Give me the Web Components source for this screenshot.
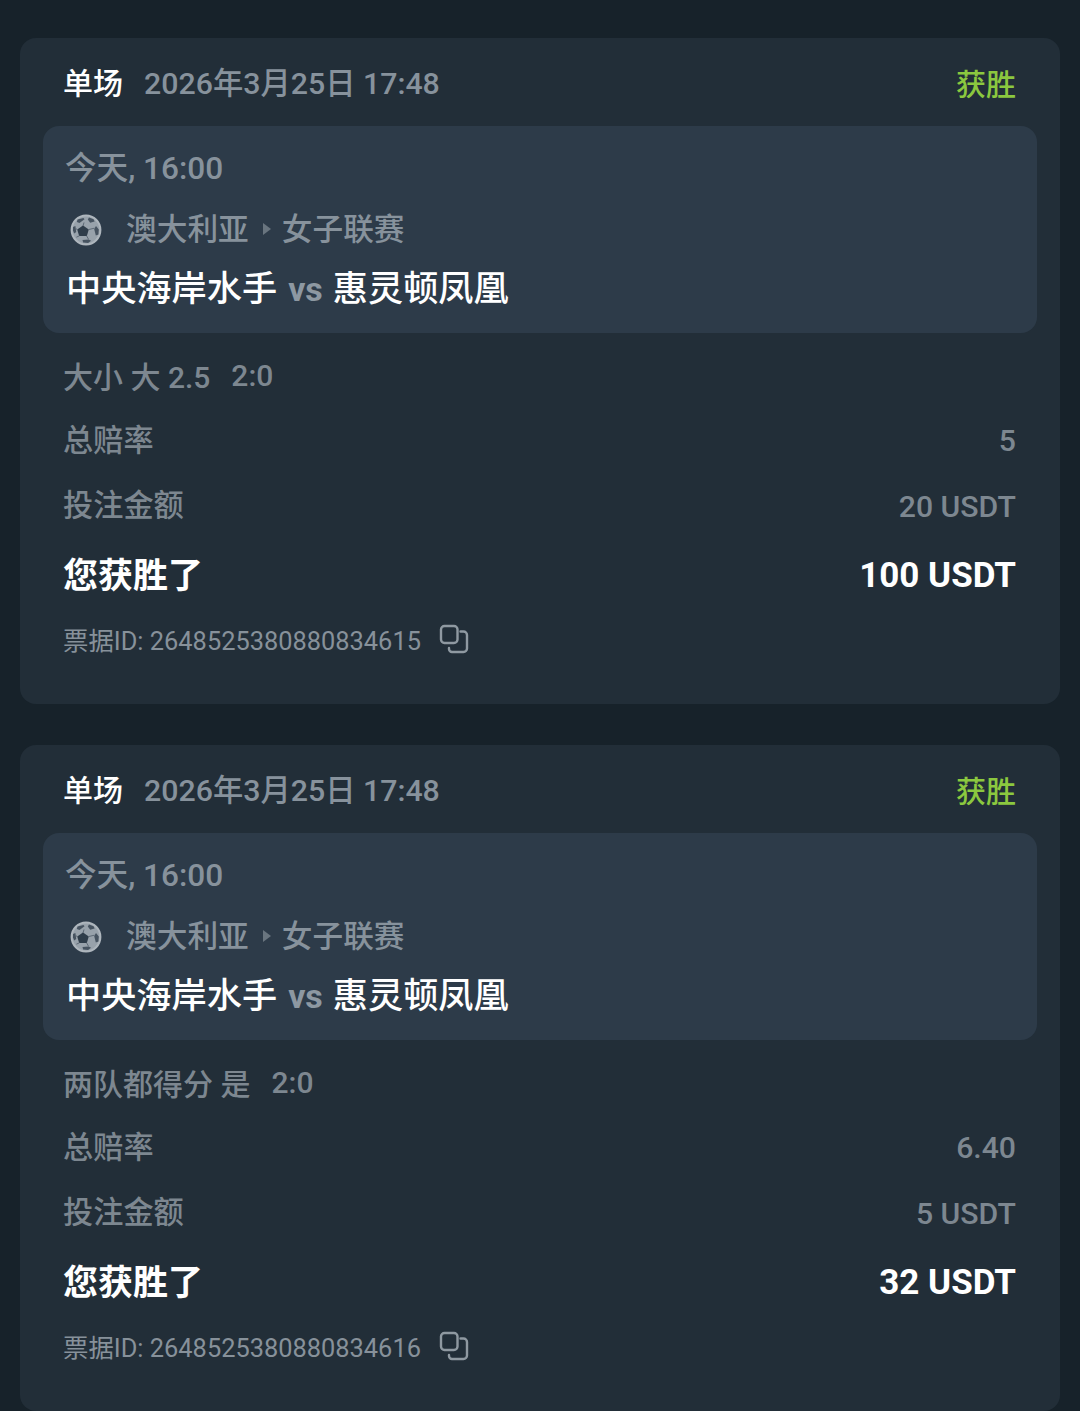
<!DOCTYPE html>
<html lang="zh-CN">
<head>
<meta charset="utf-8">
<title>Tickets</title>
<style>
  html, body { margin: 0; height: 1411px; overflow: hidden; }
  body {
    background: #17222a;
    font-family: Roboto, "Noto Sans CJK SC", sans-serif;
  }
  #list { display: flex; flex-direction: column; gap: 41px; padding: 38px 20px 0; }
</style>
</head>
<body>
<div id="list">
  <ticket-card market="大小 大 2.5" score="2:0" odds="5" stake="20 USDT" win="100 USDT" ticket="2648525380880834615"></ticket-card>
  <ticket-card market="两队都得分 是" score="2:0" odds="6.40" stake="5 USDT" win="32 USDT" ticket="2648525380880834616"></ticket-card>
</div>

<script>
class SoccerIcon extends HTMLElement {
  constructor() {
    super();
    this.attachShadow({mode: 'open'}).innerHTML = `
      <style>
        :host { display: block; width: 32px; height: 32px; }
        svg { display: block; }
      </style>
      <svg width="32" height="32" viewBox="0 0 32 32">
        <circle cx="16" cy="16" r="14.4" fill="#98a2ab" stroke="#aeb6bd" stroke-width="2"/>
        <path d="M13 11.5l5.8 3.9-2 6.6H9.2l-2-6.6z" fill="#2f3d4a"/>
        <path d="M7.5 5.5l6-1.6 1 1.4-5 3.8-2.6-1.2z" fill="#465360"/>
        <path d="M19 3.4l4.6 1.8 1 2.4-4.4 1.2-2.4-3.4z" fill="#465360"/>
        <path d="M26 12l2.8 3.4-.4 5-2.6 1.2-1.6-6.6z" fill="#465360"/>
        <path d="M3 13l2.4-1 .8 6-2 1.4-1.2-3z" fill="#465360"/>
        <path d="M12.5 26l6-.6 2.6 1.4-3 2.2-5-.6z" fill="#465360"/>
        <path d="M13 12l1-3.5M18.4 15.6l6-1.4M16.6 21.8l2 3.6M9.4 21.8l-3 1.4M7.6 15.6l-2-1" stroke="#5d6975" stroke-width="1" fill="none"/>
      </svg>
    `;
  }
}
customElements.define('soccer-icon', SoccerIcon);

class CopyIcon extends HTMLElement {
  constructor() {
    super();
    this.attachShadow({mode: 'open'}).innerHTML = `
      <style>
        :host { display: block; width: 30px; height: 30px; }
        svg { display: block; }
      </style>
      <svg width="30" height="30" viewBox="0 0 30 30" fill="none" stroke="#8f99a1" stroke-width="2.4" stroke-linecap="round">
        <rect x="2" y="2" width="16.5" height="17" rx="3.5"/>
        <path d="M21.5 7.5h3a3.5 3.5 0 0 1 3.5 3.5v13.5a3.5 3.5 0 0 1-3.5 3.5H13a3 3 0 0 1-3-3v-1"/>
      </svg>
    `;
  }
}
customElements.define('copy-icon', CopyIcon);

class MatchPanel extends HTMLElement {
  constructor() {
    super();
    this.attachShadow({mode: 'open'}).innerHTML = `
      <style>
        :host {
          display: block; height: 207px; box-sizing: border-box;
          margin: 0 23px; padding: 23px 22px 0;
          background: #2d3b49; border-radius: 16px;
        }
        .time { font-size: 31.6px; line-height: 40px; font-weight: 500; color: #87929c; }
        .league { display: flex; align-items: center; height: 40px; margin-top: 17px; font-size: 30.7px; font-weight: 500; color: #87929c; }
        soccer-icon { margin: 7px 24px 0 5px; }
        .arrow { width: 0; height: 0; margin: 5px 11px 0 14px; border-left: 8px solid #69757f; border-top: 6px solid transparent; border-bottom: 6px solid transparent; }
        .teams { margin-top: 22px; padding-left: 1px; font-size: 35.2px; line-height: 42px; font-weight: 500; color: #fff; white-space: nowrap; }
        .vs { font-size: 34px; font-weight: 700; color: #8d98a2; margin: 0 10px 0 11px; }
      </style>
      <div class="time">今天, 16:00</div>
      <div class="league"><soccer-icon></soccer-icon>澳大利亚<span class="arrow"></span>女子联赛</div>
      <div class="teams">中央海岸水手<span class="vs">vs</span>惠灵顿凤凰</div>
    `;
  }
}
customElements.define('match-panel', MatchPanel);

class InfoRow extends HTMLElement {
  constructor() {
    super();
    this.attachShadow({mode: 'open'}).innerHTML = `
      <style>
        :host {
          display: flex; justify-content: space-between; align-items: center;
          height: 40px; margin-top: 25.5px; font-size: 30.2px; font-weight: 500; color: #7d8790;
        }
        :host([strong]) { margin-top: 29px; font-size: 35px; font-weight: 700; color: #fff; }
        .label { padding-bottom: 6px; }
      </style>
      <span class="label"><slot name="label"></slot></span>
      <span><slot name="value"></slot></span>
    `;
  }
}
customElements.define('info-row', InfoRow);

class TicketCard extends HTMLElement {
  constructor() {
    super();
    const a = n => this.getAttribute(n);
    this.attachShadow({mode: 'open'}).innerHTML = `
      <style>
        :host {
          display: block; height: 666px; box-sizing: border-box; padding-top: 23px;
          background: #222e38; border-radius: 16px;
        }
        .head { display: flex; align-items: center; height: 40px; padding: 0 44px 0 44px; }
        .type { font-size: 30px; font-weight: 500; color: #fff; margin-right: 21px; margin-left: -1px; }
        .date { font-size: 30.3px; font-weight: 500; color: #87929c; }
        .status { margin-left: auto; padding-top: 2px; font-size: 30px; font-weight: 500; color: #8bc83f; }
        match-panel { margin-top: 25px; }
        .body { padding: 0 44px 0 43px; }
        .market { display: flex; height: 40px; align-items: center; margin: 22px 0 2.5px; font-size: 30px; font-weight: 500; color: #7d8790; }
        .market span { margin-left: 21px; }
        .id { display: flex; align-items: center; height: 32px; margin-top: 28px; font-size: 25.4px; color: #87919a; }
        copy-icon { margin-left: 18px; }
      </style>
      <div class="head">
        <span class="type">单场</span>
        <span class="date">2026年3月25日 17:48</span>
        <span class="status">获胜</span>
      </div>
      <match-panel></match-panel>
      <div class="body">
        <div class="market">${a('market')}<span>${a('score')}</span></div>
        <info-row><span slot="label">总赔率</span><span slot="value">${a('odds')}</span></info-row>
        <info-row><span slot="label">投注金额</span><span slot="value">${a('stake')}</span></info-row>
        <info-row strong><span slot="label">您获胜了</span><span slot="value">${a('win')}</span></info-row>
        <div class="id">票据ID: ${a('ticket')}<copy-icon></copy-icon></div>
      </div>
    `;
  }
}
customElements.define('ticket-card', TicketCard);
</script>
</body>
</html>
